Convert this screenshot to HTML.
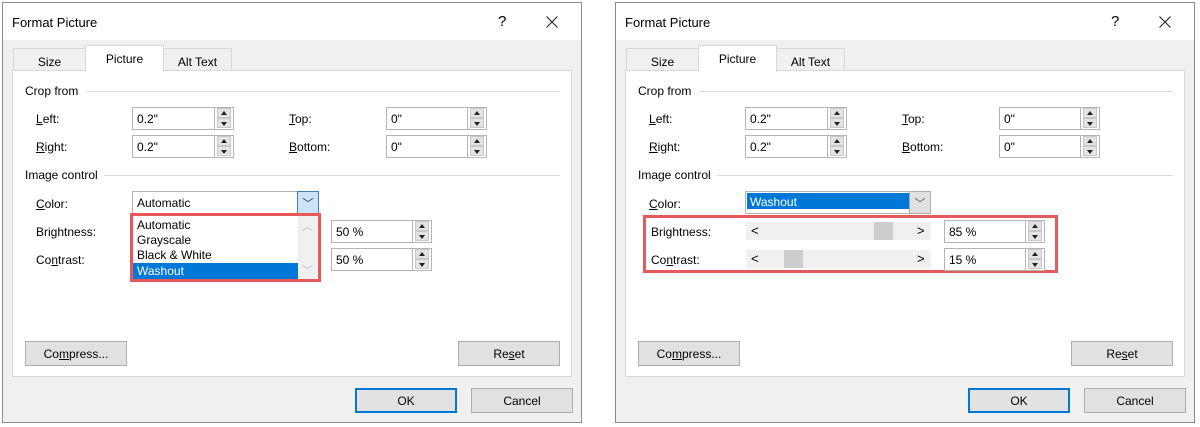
<!DOCTYPE html><html><head><style>
*{box-sizing:border-box;margin:0;padding:0}
body{width:1200px;height:427px;background:#fff;position:relative;font-family:"Liberation Sans",sans-serif;font-size:12px;color:#000;overflow:hidden}
.a{position:absolute}
.dlg{position:absolute;top:2px;width:580px;height:421px;border:1px solid #8a8a8a;background:#f0f0f0}
.tb{position:absolute;left:0;top:0;width:578px;height:37px;background:#fff}
.ttl{left:9px;top:12px;font-size:13px}
.tab{position:absolute;background:#f0f0f0;border:1px solid #d9d9d9;border-bottom:none;text-align:center;padding-top:6px}
.panel{position:absolute;left:9px;top:67px;width:560px;height:307px;background:#fff;border:1px solid #d9d9d9}
.inp{position:absolute;height:23px;background:#fff;border:1px solid #b4b4b4;padding:4px 0 0 4px}
.sp{position:absolute;right:0;top:0;width:19px;height:21px;border-left:1px solid #b4b4b4}
.sp i{position:absolute;left:2px;width:14px;height:10px;background:#e3e3e3;border:1px solid #c8c8c8}
.sp i:before{content:"";position:absolute;left:3px;border-left:3px solid transparent;border-right:3px solid transparent}
.sp .u{top:0}.sp .u:before{top:2px;border-bottom:4px solid #222}
.sp .d{top:10px}.sp .d:before{top:3px;border-top:4px solid #222}
.line{position:absolute;height:1px;background:#dcdcdc}
.btn{position:absolute;width:102px;height:25px;background:#e1e1e1;border:1px solid #adadad;text-align:center;padding-top:5px}
u{text-decoration:underline}
</style></head><body>

<!-- LEFT DIALOG -->
<div class="dlg" style="left:2px">
<div class="tb"></div>
<div class="a ttl">Format Picture</div>
<div class="a" style="left:495px;top:10px;font-size:15px">?</div>
<svg class="a" style="left:543px;top:13px" width="12" height="12"><path d="M0.5 0.5L11.5 11.5M11.5 0.5L0.5 11.5" stroke="#222" stroke-width="1.1"/></svg>
<div class="tab" style="left:10px;top:45px;width:73px;height:23px">Size</div>
<div class="tab" style="left:160px;top:45px;width:69px;height:23px">Alt Text</div>
<div class="panel"></div>
<div class="tab" style="left:82px;top:42px;width:79px;height:27px;background:#fff">Picture</div>
</div>
<div class="a" style="left:25px;top:84px">Crop from</div><div class="line" style="left:86px;top:91px;width:474px"></div>
<div class="a" style="left:36px;top:112px"><u>L</u>eft:</div>
<div class="a" style="left:36px;top:140px"><u>R</u>ight:</div>
<div class="a" style="left:289px;top:112px"><u>T</u>op:</div>
<div class="a" style="left:289px;top:140px"><u>B</u>ottom:</div>
<div class="inp" style="left:132px;top:107px;width:102px">0.2"<div class="sp"><i class="u"></i><i class="d"></i></div></div>
<div class="inp" style="left:132px;top:135px;width:102px">0.2"<div class="sp"><i class="u"></i><i class="d"></i></div></div>
<div class="inp" style="left:386px;top:107px;width:101px">0"<div class="sp"><i class="u"></i><i class="d"></i></div></div>
<div class="inp" style="left:386px;top:135px;width:101px">0"<div class="sp"><i class="u"></i><i class="d"></i></div></div>
<div class="a" style="left:25px;top:168px">Image control</div><div class="line" style="left:104px;top:175px;width:456px"></div>
<div class="a" style="left:36px;top:197px"><u>C</u>olor:</div>
<div class="a" style="left:36px;top:225px">Bri<u>g</u>htness:</div>
<div class="a" style="left:36px;top:253px">Co<u>n</u>trast:</div>
<div class="inp" style="left:132px;top:191px;width:187px">Automatic</div>
<div class="a" style="left:297px;top:191px;width:22px;height:23px;background:#cce4f7;border:1px solid #3c7fb1;text-align:center;color:#333;font-size:11px;padding-top:3px">﹀</div>
<div class="a" style="left:130px;top:213px;width:191px;height:69px;border:3px solid #e8585a;background:#fff"></div>
<div class="a" style="left:298px;top:216px;width:19px;height:63px;background:#f0f0f0"></div>
<div class="a" style="left:302px;top:218px;color:#bbb;font-size:11px">︿</div>
<div class="a" style="left:302px;top:262px;color:#bbb;font-size:11px">﹀</div>
<div class="a" style="left:137px;top:218px">Automatic</div>
<div class="a" style="left:137px;top:233px">Grayscale</div>
<div class="a" style="left:137px;top:248px">Black &amp; White</div>
<div class="a" style="left:133px;top:263px;width:165px;height:16px;background:#0078d7;color:#fff;padding:1px 0 0 4px">Washout</div>
<div class="inp" style="left:331px;top:220px;width:101px">50 %<div class="sp"><i class="u"></i><i class="d"></i></div></div>
<div class="inp" style="left:331px;top:248px;width:101px">50 %<div class="sp"><i class="u"></i><i class="d"></i></div></div>
<div class="btn" style="left:25px;top:341px">Co<u>m</u>press...</div>
<div class="btn" style="left:458px;top:341px">Re<u>s</u>et</div>
<div class="btn" style="left:355px;top:388px;border:2px solid #0078d7;padding-top:4px">OK</div>
<div class="btn" style="left:471px;top:388px">Cancel</div>

<!-- RIGHT DIALOG -->
<div class="dlg" style="left:615px">
<div class="tb"></div>
<div class="a ttl">Format Picture</div>
<div class="a" style="left:495px;top:10px;font-size:15px">?</div>
<svg class="a" style="left:543px;top:13px" width="12" height="12"><path d="M0.5 0.5L11.5 11.5M11.5 0.5L0.5 11.5" stroke="#222" stroke-width="1.1"/></svg>
<div class="tab" style="left:10px;top:45px;width:73px;height:23px">Size</div>
<div class="tab" style="left:160px;top:45px;width:69px;height:23px">Alt Text</div>
<div class="panel"></div>
<div class="tab" style="left:82px;top:42px;width:79px;height:27px;background:#fff">Picture</div>
</div>
<div class="a" style="left:638px;top:84px">Crop from</div><div class="line" style="left:699px;top:91px;width:474px"></div>
<div class="a" style="left:649px;top:112px"><u>L</u>eft:</div>
<div class="a" style="left:649px;top:140px"><u>R</u>ight:</div>
<div class="a" style="left:902px;top:112px"><u>T</u>op:</div>
<div class="a" style="left:902px;top:140px"><u>B</u>ottom:</div>
<div class="inp" style="left:745px;top:107px;width:102px">0.2"<div class="sp"><i class="u"></i><i class="d"></i></div></div>
<div class="inp" style="left:745px;top:135px;width:102px">0.2"<div class="sp"><i class="u"></i><i class="d"></i></div></div>
<div class="inp" style="left:999px;top:107px;width:101px">0"<div class="sp"><i class="u"></i><i class="d"></i></div></div>
<div class="inp" style="left:999px;top:135px;width:101px">0"<div class="sp"><i class="u"></i><i class="d"></i></div></div>
<div class="a" style="left:638px;top:168px">Image control</div><div class="line" style="left:717px;top:175px;width:456px"></div>
<div class="a" style="left:649px;top:197px"><u>C</u>olor:</div>
<div class="a" style="left:651px;top:225px">Bri<u>g</u>htness:</div>
<div class="a" style="left:651px;top:253px">Co<u>n</u>trast:</div>
<div class="inp" style="left:745px;top:191px;width:186px;padding:1px"><div style="background:#0078d7;color:#fff;height:16px;width:163px;padding:2px 0 0 3px">Washout</div></div>
<div class="a" style="left:909px;top:191px;width:22px;height:23px;background:#e1e1e1;border:1px solid #adadad;text-align:center;color:#555;font-size:11px;padding-top:3px">﹀</div>
<div class="a" style="left:643px;top:215px;width:415px;height:58px;border:3px solid #e8585a"></div>
<div class="a" style="left:746px;top:222px;width:185px;height:18px;background:#f0f0f0"></div>
<div class="a" style="left:874px;top:222px;width:19px;height:18px;background:#cdcdcd"></div>
<div class="a" style="left:746px;top:250px;width:185px;height:18px;background:#f0f0f0"></div>
<div class="a" style="left:784px;top:250px;width:19px;height:18px;background:#cdcdcd"></div>
<div class="a" style="left:751px;top:223px;font-size:13px">&lt;</div><div class="a" style="left:917px;top:223px;font-size:13px">&gt;</div>
<div class="a" style="left:751px;top:251px;font-size:13px">&lt;</div><div class="a" style="left:917px;top:251px;font-size:13px">&gt;</div>
<div class="inp" style="left:944px;top:220px;width:101px">85 %<div class="sp"><i class="u"></i><i class="d"></i></div></div>
<div class="inp" style="left:944px;top:248px;width:101px">15 %<div class="sp"><i class="u"></i><i class="d"></i></div></div>
<div class="btn" style="left:638px;top:341px">Co<u>m</u>press...</div>
<div class="btn" style="left:1071px;top:341px">Re<u>s</u>et</div>
<div class="btn" style="left:968px;top:388px;border:2px solid #0078d7;padding-top:4px">OK</div>
<div class="btn" style="left:1084px;top:388px">Cancel</div>
</body></html>
